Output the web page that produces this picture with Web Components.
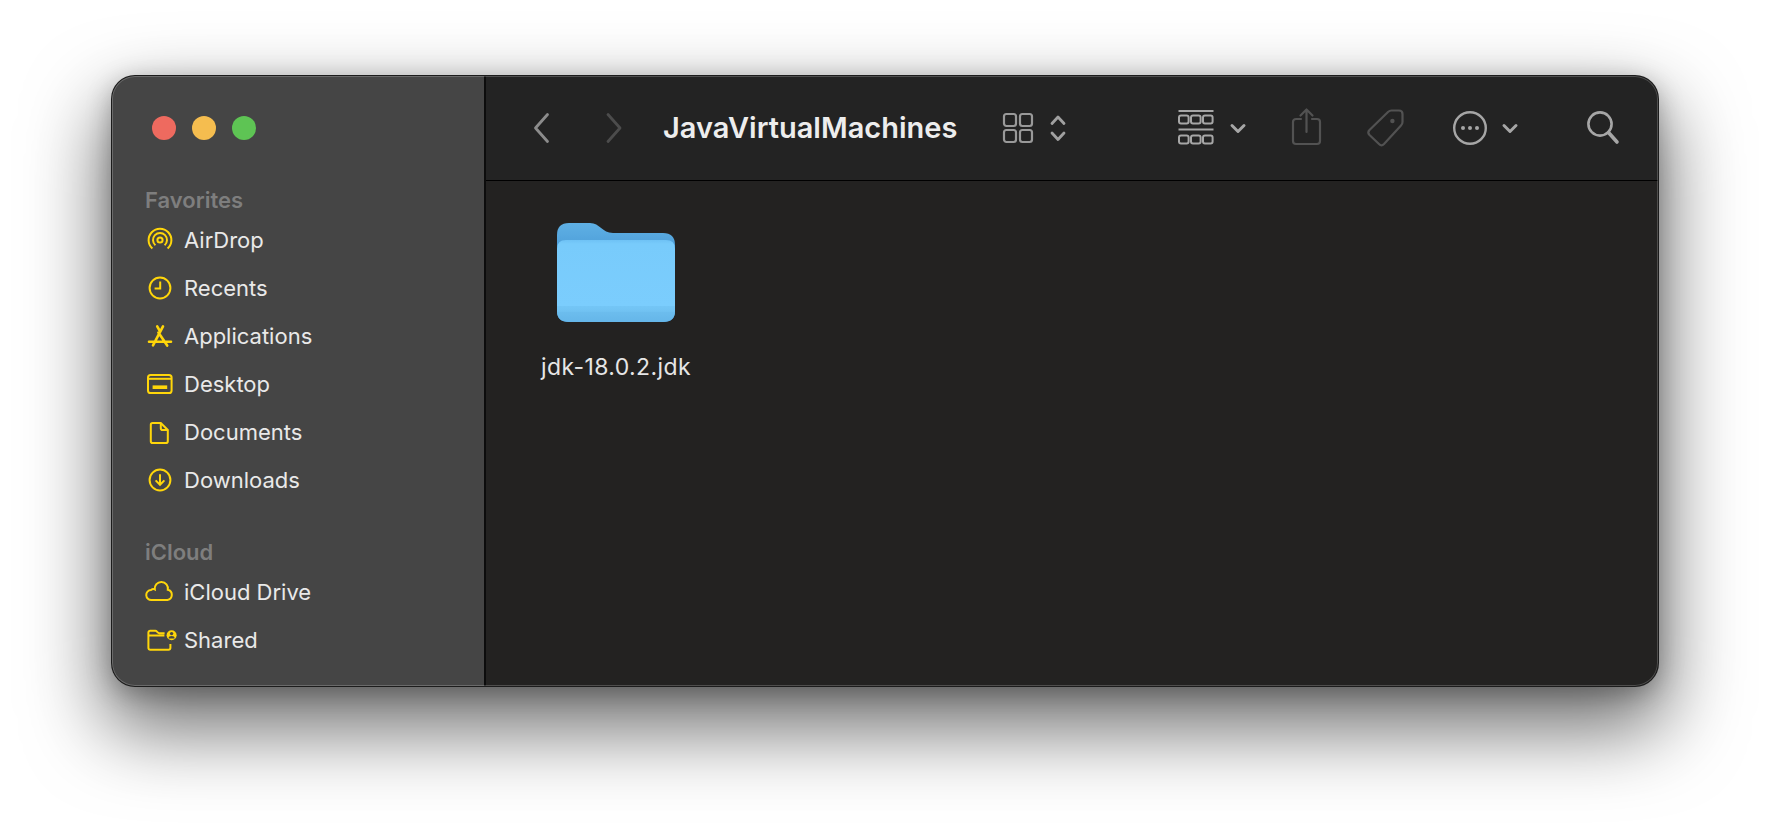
<!DOCTYPE html>
<html>
<head>
<meta charset="utf-8">
<title>JavaVirtualMachines</title>
<style>
  html, body { margin: 0; background: #fff; }
  body { width: 1770px; height: 834px; overflow: hidden; }
</style>
</head>
<body>
<finder-window>
  <finder-sidebar slot="sidebar">
    <side-section title="Favorites">
      <side-item icon="airdrop">AirDrop</side-item>
      <side-item icon="recents">Recents</side-item>
      <side-item icon="apps">Applications</side-item>
      <side-item icon="desktop">Desktop</side-item>
      <side-item icon="docs">Documents</side-item>
      <side-item icon="downloads">Downloads</side-item>
    </side-section>
    <side-section title="iCloud" style="margin-top:24px">
      <side-item icon="cloud">iCloud Drive</side-item>
      <side-item icon="shared">Shared</side-item>
    </side-section>
  </finder-sidebar>
  <finder-toolbar slot="toolbar" title="JavaVirtualMachines"></finder-toolbar>
  <folder-item>jdk-18.0.2.jdk</folder-item>
</finder-window>

<script>
// ventana principal
class FinderWindow extends HTMLElement {
  constructor() {
    super();
    this.attachShadow({ mode: 'open' });
    this.shadowRoot.innerHTML = `
      <style>
        :host {
          display: flex; box-sizing: border-box;
          width: 1546px; height: 610px; margin: 76px 0 0 112px;
          border-radius: 23px; background: #232221;
          box-shadow: 0 0 0 1px #1c1c1c,
            0 36px 78px 8px rgba(0,0,0,.56), 0 6px 26px rgba(0,0,0,.28);
          overflow: hidden; position: relative;
        }
        .main { flex: 1; display: flex; flex-direction: column; min-width: 0; }
        .content { flex: 1; padding: 42px 0 0 54px; display: flex; align-items: flex-start; }
        .edge { position: absolute; inset: 0; border-radius: 23px; pointer-events: none;
          box-shadow: inset 0 0 0 1px rgba(255,255,255,.2); }
      </style>
      <slot name="sidebar"></slot>
      <div class="main">
        <slot name="toolbar"></slot>
        <div class="content"><slot></slot></div>
      </div>
      <div class="edge"></div>`;
  }
}

class FinderSidebar extends HTMLElement {
  constructor() {
    super();
    this.attachShadow({ mode: 'open' });
    this.shadowRoot.innerHTML = `
      <style>
        :host {
          display: block; box-sizing: border-box; flex: none;
          width: 374px; height: 100%; background: #454545;
          border-right: 2px solid #0c0c0c;
          padding: 40px 0 0 33px;
        }
        .lights { display: flex; gap: 16px; margin: 0 0 36px 7px; }
        .lights span { width: 24px; height: 24px; border-radius: 50%; }
      </style>
      <div class="lights">
        <span style="background:#ee6a5f"></span>
        <span style="background:#f5bd4f"></span>
        <span style="background:#5ec454"></span>
      </div>
      <slot></slot>`;
  }
}

class SideSection extends HTMLElement {
  constructor() {
    super();
    this.attachShadow({ mode: 'open' });
    this.shadowRoot.innerHTML = `
      <style>
        :host { display: block; font-family: Inter, "Liberation Sans", sans-serif; }
        .head { height: 32px; padding-top: 8px; line-height: 32px; font-size: 22px; font-weight: 600; color: #7e7e7e; }
      </style>
      <div class="head">${this.getAttribute('title')}</div>
      <slot></slot>`;
  }
}

const YELLOW = '#ffd60a';
const sideIcons = {
  airdrop: `<circle cx="15" cy="15" r="2.6"/><path d="M10.4 20.2a7 7 0 1 1 9.2 0"/><path d="M7.4 23.6a11.4 11.4 0 1 1 15.2 0"/>`,
  recents: `<circle cx="15" cy="15" r="10.4"/><path d="M15.2 8.6v7H9.6"/>`,
  apps: `<path d="M12.2 5.4l2.4 4.2M18 5.4L8 24.4M13.4 11.6l8.8 13M4 20.8h22" stroke-width="2.6" stroke-linecap="round"/>`,
  desktop: `<rect x="3" y="6" width="23.6" height="18" rx="2.6"/><path d="M3 9.8h23.6"/><rect x="7.6" y="16.4" width="14.6" height="3.6" fill="${YELLOW}" stroke="none"/>`,
  docs: `<path d="M7.6 6h8.2l7 7v11.2a1.8 1.8 0 0 1-1.8 1.8H7.6a1.8 1.8 0 0 1-1.8-1.8V7.8A1.8 1.8 0 0 1 7.6 6z"/><path d="M15.8 6v5.2a1.8 1.8 0 0 0 1.8 1.8h5.2"/>`,
  downloads: `<circle cx="15" cy="15" r="10.4"/><path d="M15 9.2v10.4M10.6 15.4l4.4 4.4 4.4-4.4"/>`,
  cloud: `<path d="M6.5 23A5 5 0 0 1 6 13Q8 11.5 9.8 12.5A6.6 6.6 0 1 1 22.8 12.8A5.2 5.2 0 0 1 22.4 23Z"/>`,
  shared: `<path d="M25.4 19v4a1.8 1.8 0 0 1-1.8 1.8H5.2A1.8 1.8 0 0 1 3.4 23V7.6a1.8 1.8 0 0 1 1.8-1.8h5.2c1.6 0 2 2.4 4 2.4h5.2M3.4 10.4h16"/><circle cx="26.6" cy="10.2" r="5" fill="${YELLOW}" stroke="none"/><circle cx="26.6" cy="8.6" r="1.7" fill="#454545" stroke="none"/><path d="M23.6 13.4a3 2.4 0 0 1 6 0z" fill="#454545" stroke="none"/>`
};

class SideItem extends HTMLElement {
  constructor() {
    super();
    this.attachShadow({ mode: 'open' });
    this.shadowRoot.innerHTML = `
      <style>
        :host {
          display: flex; align-items: center; height: 48px; gap: 9px;
          font-family: Inter, "Liberation Sans", sans-serif; font-size: 22px; color: #e9e9e9;
        }
        svg { flex: none; width: 30px; height: 30px; overflow: visible; fill: none; stroke: ${YELLOW}; stroke-width: 2; }
      </style>
      <svg viewBox="0 0 30 30">${sideIcons[this.getAttribute('icon')]}</svg>
      <slot></slot>`;
  }
}

// barra superior: cada icono es un svg de 40px de alto
class FinderToolbar extends HTMLElement {
  icon(w, ml, body) {
    return `<svg width="${w}" height="40" viewBox="0 0 ${w} 40" style="margin-left:${ml}px">${body}</svg>`;
  }
  constructor() {
    super();
    this.attachShadow({ mode: 'open' });
    const chev = `<path d="M2 17.5l6 6 6-6" stroke="#a6a6a6" stroke-width="3"/>`;
    let squares = '';
    [7.5, 27.5].forEach(y => [1, 13, 25].forEach(x => {
      squares += `<rect x="${x}" y="${y}" width="9.6" height="8" rx="2"/>`;
    }));
    this.shadowRoot.innerHTML = `
      <style>
        :host {
          display: flex; align-items: center; box-sizing: border-box; flex: none;
          height: 105px; background: #232323; border-bottom: 1px solid #000;
          font-family: Inter, "Liberation Sans", sans-serif;
        }
        svg { flex: none; fill: none; stroke-linecap: round; stroke-linejoin: round; overflow: visible; }
        h1 { margin: 0 0 2px 41px; width: 295px; flex: none; white-space: nowrap; font-size: 29px; font-weight: 600; color: #ededed; }
      </style>
      ${this.icon(16, 47, `<path d="M14.5 6.5L2.5 20l12 13.5" stroke="#8c8c8c" stroke-width="2.8"/>`)}
      ${this.icon(16, 57, `<path d="M2 6.5L14 20 2 33.5" stroke="#4c4c4c" stroke-width="2.8"/>`)}
      <h1>${this.getAttribute('title')}</h1>
      ${this.icon(30, 45, `<g stroke="#999" stroke-width="2.2"><rect x="1" y="6" width="12" height="12" rx="2.4"/><rect x="17" y="6" width="12" height="12" rx="2.4"/><rect x="1" y="22" width="12" height="12" rx="2.4"/><rect x="17" y="22" width="12" height="12" rx="2.4"/></g>`)}
      ${this.icon(16, 17, `<path d="M2 15.5L8 9l6 6.5M2 25l6 6.5 6-6.5" stroke="#a0a0a0" stroke-width="2.8"/>`)}
      ${this.icon(36, 112, `<g stroke="#a6a6a6" stroke-width="2"><path d="M.5 3h35M.5 21.5h35" stroke-linecap="butt"/>${squares}</g>`)}
      ${this.icon(16, 16, chev)}
      ${this.icon(29, 46, `<g stroke="#525252" stroke-width="2.2"><path d="M9 11H4a3 3 0 0 0-3 3v19a3 3 0 0 0 3 3h21a3 3 0 0 0 3-3V14a3 3 0 0 0-3-3h-5"/><path d="M14.5 24V1.5M8.5 7.5l6-6 6 6"/></g>`)}
      ${this.icon(37, 46, `<path d="M2.5 22L21 4q1.5-1.5 3.5-1.5H32q3.5 0 3.5 3.5v8q0 2-1.5 3.5L17 36q-2.5 2.5-5 0L2.5 27q-2.5-2.5 0-5z" stroke="#525252" stroke-width="2.2"/><circle cx="25.4" cy="13" r="2.2" fill="#525252"/>`)}
      ${this.icon(34, 49, `<circle cx="17" cy="20" r="15.8" stroke="#a6a6a6" stroke-width="2.4"/><g fill="#a6a6a6"><circle cx="10" cy="20" r="2"/><circle cx="17" cy="20" r="2"/><circle cx="24" cy="20" r="2"/></g>`)}
      ${this.icon(16, 15, chev)}
      ${this.icon(32, 69, `<circle cx="13" cy="16" r="11.6" stroke="#a6a6a6" stroke-width="2.6"/><path d="M21.5 24.5L30 34" stroke="#a6a6a6" stroke-width="3.6"/>`)}`;
  }
}

class FolderItem extends HTMLElement {
  constructor() {
    super();
    this.attachShadow({ mode: 'open' });
    this.shadowRoot.innerHTML = `
      <style>
        :host {
          display: flex; flex-direction: column; align-items: center; width: 152px;
          font-family: Inter, "Liberation Sans", sans-serif; font-size: 23px; letter-spacing: .4px; color: #e6e6e6;
        }
        svg { display: block; margin-bottom: 29px; }
        span { line-height: 30px; white-space: nowrap; }
      </style>
      <svg width="118" height="100" viewBox="0 0 118 100">
        <defs>
          <linearGradient id="back" x1="0" y1="0" x2="0" y2="1">
            <stop offset="0" stop-color="#5fb0e4"/><stop offset=".3" stop-color="#4b9cd8"/><stop offset="1" stop-color="#4b9cd8"/>
          </linearGradient>
          <linearGradient id="front" x1="0" y1="0" x2="0" y2="1">
            <stop offset="0" stop-color="#6fc2f5"/><stop offset=".05" stop-color="#78cbfb"/><stop offset=".8" stop-color="#7bcdfd"/><stop offset=".81" stop-color="#74c6f6"/><stop offset=".87" stop-color="#71c2f2"/><stop offset=".88" stop-color="#6cbdee"/><stop offset="1" stop-color="#65b6e9"/>
          </linearGradient>
        </defs>
        <path d="M0 12Q0 0 12 0H33C43 0 45 10 56 10H106Q118 10 118 22V88Q118 99 106 99H12Q0 99 0 88Z" fill="url(#back)"/>
        <path d="M0 26Q0 17 9 17H109Q118 17 118 26V88Q118 99 106 99H12Q0 99 0 88Z" fill="url(#front)"/>
      </svg>
      <span><slot></slot></span>`;
  }
}

customElements.define('finder-window', FinderWindow);
customElements.define('finder-sidebar', FinderSidebar);
customElements.define('side-section', SideSection);
customElements.define('side-item', SideItem);
customElements.define('finder-toolbar', FinderToolbar);
customElements.define('folder-item', FolderItem);
</script>
</body>
</html>
